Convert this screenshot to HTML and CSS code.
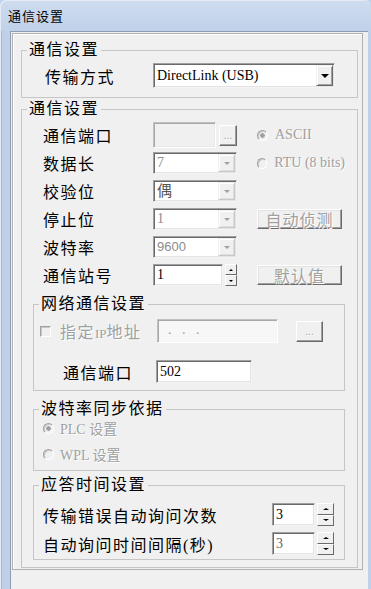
FILE: index.html
```html
<!DOCTYPE html>
<html lang="zh-CN">
<head>
    <meta charset="UTF-8">
    <meta name="viewport" content="width=device-width, initial-scale=1.0">
    <title>通信设置</title>
    <link rel="stylesheet" href="styles.css">
</head>
<body>
    <div class="window">
        <div class="titlebar">通信设置</div>
        <div class="client">
            <div class="frame">
                <fieldset class="group top-group">
                    <legend>通信设置</legend>
                    <div class="main-row">
                        <span class="label">传输方式</span>
                        <div class="combo big">
                            <span class="value">DirectLink (USB)</span>
                            <span class="drop"><i class="arrow"></i></span>
                        </div>
                    </div>
                </fieldset>

                <fieldset class="group comm-group">
                    <legend>通信设置</legend>
                    <div class="comm-grid">
                        <span class="label">通信端口</span>
                        <div class="port">
                            <div class="edit off port-edit"></div>
                            <button class="small-btn" disabled>...</button>
                        </div>
                        <div class="radio-line off"><span class="radio checked"></span>ASCII</div>

                        <span class="label">数据长</span>
                        <div class="combo off">
                            <span class="value">7</span>
                            <span class="drop"><i class="arrow"></i></span>
                        </div>
                        <div class="radio-line off"><span class="radio"></span>RTU (8 bits)</div>

                        <span class="label">校验位</span>
                        <div class="combo">
                            <span class="value cjk">偶</span>
                            <span class="drop"><i class="arrow light"></i></span>
                        </div>
                        <span></span>

                        <span class="label">停止位</span>
                        <div class="combo off">
                            <span class="value">1</span>
                            <span class="drop"><i class="arrow"></i></span>
                        </div>
                        <button class="btn" disabled>自动侦测</button>

                        <span class="label">波特率</span>
                        <div class="combo off">
                            <span class="value sans">9600</span>
                            <span class="drop"><i class="arrow"></i></span>
                        </div>
                        <span></span>

                        <span class="label">通信站号</span>
                        <div class="spin">
                            <div class="edit station">1</div>
                            <div class="spinner"><span class="up"><i></i></span><span class="down"><i></i></span></div>
                        </div>
                        <button class="btn" disabled>默认值</button>
                    </div>

                    <fieldset class="group sub net">
                        <legend>网络通信设置</legend>
                        <div class="net-row">
                            <div class="check-line off"><span class="check"></span><span>指定<span class="ip">IP</span>地址</span></div>
                            <div class="edit ip-edit">.&nbsp;&nbsp;&nbsp;.&nbsp;&nbsp;&nbsp;.</div>
                            <button class="small-btn wide" disabled>...</button>
                        </div>
                        <div class="net-row port-row">
                            <span class="label port-label">通信端口</span>
                            <div class="edit tcp-port">502</div>
                        </div>
                    </fieldset>

                    <fieldset class="group sub baud">
                        <legend>波特率同步依据</legend>
                        <div class="radio-line off sync"><span class="radio checked"></span>PLC 设置</div>
                        <div class="radio-line off sync"><span class="radio"></span>WPL 设置</div>
                    </fieldset>

                    <fieldset class="group sub answer">
                        <legend>应答时间设置</legend>
                        <div class="answer-row">
                            <span class="label answer-label">传输错误自动询问次数</span>
                            <div class="spin">
                                <div class="edit count">3</div>
                                <div class="spinner big-spin"><span class="up"><i></i></span><span class="down"><i></i></span></div>
                            </div>
                        </div>
                        <div class="answer-row">
                            <span class="label answer-label">自动询问时间间隔(秒)</span>
                            <div class="spin faded">
                                <div class="edit count">3</div>
                                <div class="spinner big-spin"><span class="up"><i></i></span><span class="down"><i></i></span></div>
                            </div>
                        </div>
                    </fieldset>
                </fieldset>
            </div>
        </div>
    </div>
</body>
</html>
```

FILE: styles.css
```css
body {
    margin: 0;
    width: 371px;
    height: 589px;
    overflow: hidden;
    background: #bfd1ea;
    font-family: "Liberation Serif", "Noto Sans CJK SC", serif;
}

.window {
    height: 589px;
    display: flex;
    flex-direction: column;
    background: #bfd1ea;
    border-radius: 6px 6px 0 0;
    box-shadow: inset 1px 0 0 #e4ebf5, inset 2px 0 0 #a3b8d4;
}

.titlebar {
    height: 31px;
    line-height: 31px;
    padding-left: 8px;
    font-family: "Noto Sans CJK SC", sans-serif;
    font-size: 13px;
    letter-spacing: 1px;
    color: #000;
    background: linear-gradient(#cfdcee, #bfd1ea);
    border-radius: 6px 6px 0 0;
    box-shadow: inset 1px 1px 0 #e4ebf5;
}

.client {
    flex: 1;
    margin: 0 3px 0 10px;
    padding: 1px 5px 0 1px;
    background: #f0f0f0;
    border-top: 1px solid #8c9db4;
    border-left: 1px solid #8c9db4;
}

.frame {
    border: 1px solid #b0b0b0;
    box-shadow: inset 1px 1px 0 #fff;
    padding: 7px 4px 1px 8px;
}

/* group boxes */
.group {
    margin: 0;
    padding: 0;
    min-width: 0;
    border: 1px solid #c6c6c6;
}

legend {
    margin-left: 5px;
    padding: 0 2px;
    font-size: 16px;
    line-height: 18px;
    letter-spacing: 1.5px;
    color: #000;
}

.comm-group {
    margin-top: 2px;
}

.sub {
    margin: 0 12px 0 11px;
}

.net {
    margin-top: 6px;
}

.baud {
    margin-top: 9px;
    padding-bottom: 6px;
}

.answer {
    margin-top: 5px;
    margin-bottom: 7px;
    padding-bottom: 4px;
}

.label {
    font-size: 16px;
    letter-spacing: 1.5px;
    color: #000;
    white-space: nowrap;
}

.off,
.btn:disabled,
.small-btn:disabled {
    color: #a0a0a0;
    text-shadow: 1px 1px 0 #fff;
}

/* first group */
.main-row {
    display: flex;
    align-items: center;
    height: 25px;
    margin: 4px 0 9px 23px;
}

.main-row .label {
    width: 108px;
}

/* combo boxes and edits */
.combo {
    box-sizing: border-box;
    display: flex;
    align-items: stretch;
    width: 84px;
    height: 22px;
    background: #fff;
    border: 1px solid;
    border-color: #a0a0a0 #f4f4f4 #f4f4f4 #a0a0a0;
    box-shadow: inset 1px 1px 0 #6a6a6a, inset -1px -1px 0 #e3e3e3;
}

.combo.big {
    width: 182px;
    height: 25px;
}

.combo .value {
    flex: 1;
    padding-left: 3px;
    font-size: 14px;
    line-height: 20px;
    color: #000;
}

.combo.big .value {
    line-height: 23px;
}

.combo.off .value {
    color: #8c8c8c;
    text-shadow: none;
}

.combo .value.cjk {
    font-size: 15px;
    color: #555;
}

.combo .value.sans {
    font-family: "Liberation Sans", sans-serif;
    font-size: 13px;
}

.drop {
    box-sizing: border-box;
    width: 17px;
    margin: 1px 1px 1px 0;
    display: flex;
    align-items: center;
    justify-content: center;
    background: #f0f0f0;
    border: 1px solid;
    border-color: #f0f0f0 #6a6a6a #6a6a6a #f0f0f0;
    box-shadow: inset 1px 1px 0 #fff, inset -1px -1px 0 #a0a0a0;
}

.combo.off .drop,
.combo .drop:has(.light) {
    border-color: #f0f0f0 #c8c8c8 #c8c8c8 #f0f0f0;
    box-shadow: inset 1px 1px 0 #fff, inset -1px -1px 0 #dedede;
}

.arrow {
    width: 0;
    height: 0;
    border-left: 4px solid transparent;
    border-right: 4px solid transparent;
    border-top: 4px solid #000;
}

.combo.off .arrow,
.arrow.light {
    border-left-width: 3px;
    border-right-width: 3px;
    border-top: 3px solid #a0a0a0;
}

.edit {
    box-sizing: border-box;
    height: 22px;
    padding-left: 3px;
    font-size: 14px;
    line-height: 20px;
    color: #000;
    background: #fff;
    border: 1px solid;
    border-color: #a0a0a0 #f4f4f4 #f4f4f4 #a0a0a0;
    box-shadow: inset 1px 1px 0 #6a6a6a, inset -1px -1px 0 #e3e3e3;
}

.edit.off {
    background: #f0f0f0;
    border-color: #c0c0c0 #fff #fff #c0c0c0;
    box-shadow: inset 1px 1px 0 #a8a8a8, inset -1px -1px 0 #e8e8e8;
}

/* second group grid */
.comm-grid {
    display: grid;
    grid-template-columns: 90px 84px 88px;
    grid-auto-rows: 28px;
    column-gap: 20px;
    align-items: center;
    margin: 3px 0 0 21px;
}

.port {
    display: flex;
    align-items: center;
    gap: 3px;
}

.port-edit {
    width: 63px;
    height: 26px;
}

.small-btn {
    box-sizing: border-box;
    width: 18px;
    height: 21px;
    padding: 0;
    font-family: "Liberation Sans", sans-serif;
    font-size: 10px;
    line-height: 17px;
    background: #f0f0f0;
    border: 1px solid;
    border-color: #fff #6a6a6a #6a6a6a #fff;
    box-shadow: inset -1px -1px 0 #a0a0a0;
}

.small-btn.wide {
    width: 27px;
}

.btn {
    box-sizing: border-box;
    width: 85px;
    height: 20px;
    padding: 0;
    font-family: "Noto Sans CJK SC", sans-serif;
    font-size: 16px;
    line-height: 17px;
    letter-spacing: 1px;
    background: #f0f0f0;
    border: 1px solid;
    border-color: #fff #6a6a6a #6a6a6a #fff;
    box-shadow: inset -1px -1px 0 #a0a0a0, inset 1px 1px 0 #e3e3e3;
}

.radio-line {
    display: flex;
    align-items: center;
    gap: 7px;
    font-size: 14px;
    white-space: nowrap;
}

.radio {
    box-sizing: border-box;
    width: 11px;
    height: 11px;
    border-radius: 50%;
    border: 1px solid;
    border-color: #a0a0a0 #fff #fff #a0a0a0;
    background: #f0f0f0;
    box-shadow: inset 1px 1px 0 #c8c8c8;
}

.radio.checked {
    background: radial-gradient(circle, #a0a0a0 0, #a0a0a0 2px, #f0f0f0 2.5px);
}

/* spin boxes */
.spin {
    display: flex;
    align-items: center;
    gap: 2px;
}

.station {
    width: 70px;
}

.spinner {
    display: flex;
    flex-direction: column;
    width: 12px;
    height: 22px;
}

.spinner span {
    box-sizing: border-box;
    flex: 1;
    display: flex;
    align-items: center;
    justify-content: center;
    background: #f0f0f0;
    border: 1px solid;
    border-color: #fff #6a6a6a #6a6a6a #fff;
}

.spinner i {
    width: 0;
    height: 0;
    border-left: 2px solid transparent;
    border-right: 2px solid transparent;
}

.spinner .up i {
    border-bottom: 2px solid #000;
}

.spinner .down i {
    border-top: 2px solid #000;
}

.big-spin {
    width: 17px;
    height: 23px;
}

.big-spin i {
    border-left-width: 3px;
    border-right-width: 3px;
}

/* network group */
.net-row {
    display: flex;
    align-items: center;
    height: 26px;
    margin: 5px 0 0 6px;
}

.check-line {
    display: flex;
    align-items: center;
    gap: 9px;
    width: 117px;
    font-size: 16px;
    letter-spacing: 1.5px;
    white-space: nowrap;
}

.check-line .ip {
    font-size: 13px;
    letter-spacing: 0;
}

.check {
    box-sizing: border-box;
    width: 11px;
    height: 11px;
    border: 1px solid;
    border-color: #a0a0a0 #fff #fff #a0a0a0;
    box-shadow: inset 1px 1px 0 #c8c8c8;
    background: #f0f0f0;
}

.ip-edit {
    width: 121px;
    height: 24px;
    padding-left: 10px;
    line-height: 20px;
    color: #a0a0a0;
    background: #f7f7f7;
    border-color: #c0c0c0 #fff #fff #c0c0c0;
    box-shadow: inset 1px 1px 0 #a8a8a8;
    margin-right: 18px;
}

.port-row {
    height: 23px;
    margin: 16px 0 7px 29px;
}

.port-label {
    width: 93px;
}

.tcp-port {
    width: 96px;
    height: 23px;
    line-height: 21px;
}

/* baud sync group */
.sync {
    height: 20px;
    margin-left: 9px;
    gap: 6px;
}

.sync + .sync {
    margin-top: 6px;
}

/* answer group */
.answer-row {
    display: flex;
    align-items: center;
    height: 23px;
    margin: 9px 0 0 9px;
}

.answer-row + .answer-row {
    margin-top: 6px;
}

.answer-label {
    width: 229px;
}

.count {
    width: 43px;
    height: 23px;
    line-height: 21px;
}

.faded .count {
    color: #666;
}
```
